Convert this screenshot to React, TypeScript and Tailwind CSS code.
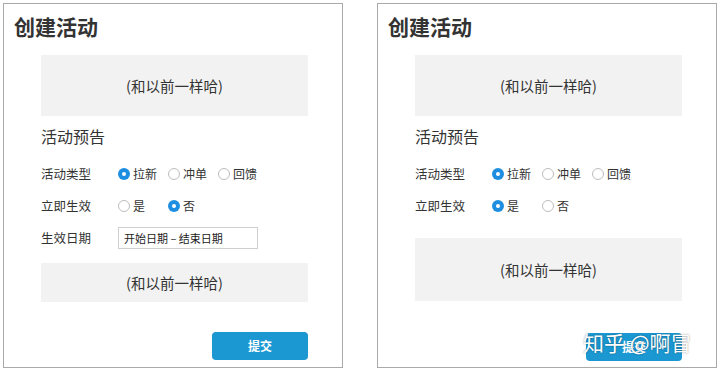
import React from "react";

const font = { fontFamily: '"Noto Sans CJK SC", "Noto Sans", sans-serif' };

const Radio = ({ label, checked }: { label: string; checked?: boolean }) => (
  <div className="flex w-[50px] items-center">
    {checked ? (
      <span className="flex h-[12px] w-[12px] items-center justify-center rounded-full bg-[#1e8fe0]">
        <span className="h-[4px] w-[4px] rounded-full bg-white"></span>
      </span>
    ) : (
      <span className="h-[12px] w-[12px] rounded-full border border-[#bdbdbd] bg-white"></span>
    )}
    <span className="ml-[3px] text-[12px] leading-none text-[#333]">{label}</span>
  </div>
);

const Row = ({ label, children, className }: { label: string; children: React.ReactNode; className?: string }) => (
  <div className={"flex h-[24px] items-center " + (className ?? "")}>
    <div className="w-[77px] text-[12.5px] text-[#333]">{label}</div>
    <div className="flex items-center">{children}</div>
  </div>
);

const Placeholder = ({ className }: { className: string }) => (
  <div className={"flex w-[267px] items-center justify-center bg-[#f2f2f2] text-[14.5px] text-[#333] " + className}>
    (和以前一样哈)
  </div>
);

const Panel = ({ immediate }: { immediate: boolean }) => (
  <div className="relative flex h-[365px] w-[340px] flex-col border border-[#aaaaaa] bg-white">
    <div className="ml-[10px] mt-[8px] h-[28px] text-[21px] font-bold leading-[28px] text-[#333]">创建活动</div>
    <div className="ml-[37px] flex flex-col">
      <Placeholder className="mt-[15px] h-[61px]" />
      <div className="mt-[8px] h-[24px] text-[16px] leading-[24px] text-[#333]">活动预告</div>
      <Row label="活动类型" className="mt-[14px]">
        <Radio label="拉新" checked />
        <Radio label="冲单" />
        <Radio label="回馈" />
      </Row>
      <Row label="立即生效" className="mt-[8px]">
        <Radio label="是" checked={immediate} />
        <Radio label="否" checked={!immediate} />
      </Row>
      {immediate ? (
        <Placeholder className="mt-[20px] h-[63px]" />
      ) : (
        <>
          <Row label="生效日期" className="mt-[8px]">
            <div className="flex h-[22px] w-[140px] items-center border border-[#cfcfcf] px-[5px] text-[11px] text-[#222]">
              开始日期 – 结束日期
            </div>
          </Row>
          <Placeholder className="mt-[13px] h-[39px]" />
        </>
      )}
      <div className={"flex w-[267px] justify-end " + (immediate ? "mt-[32px]" : "mt-[30px]")}>
        <button className="flex h-[28px] w-[96px] items-center justify-center rounded-[4px] bg-[#1b98d2] text-[12px] font-bold text-white">
          提交
        </button>
      </div>
    </div>
    {immediate && (
      <div
        className="absolute left-[205px] top-[328px] text-[21px] leading-none text-white"
        style={{ textShadow: "0 0 2px rgba(0,0,0,0.45)" }}
      >
        知乎 @啊冒
      </div>
    )}
  </div>
);

export default function App() {
  return (
    <div className="flex h-[371px] w-[720px] gap-[34px] bg-white pl-[3px] pt-[3px]" style={font}>
      <Panel immediate={false} />
      <Panel immediate />
    </div>
  );
}
